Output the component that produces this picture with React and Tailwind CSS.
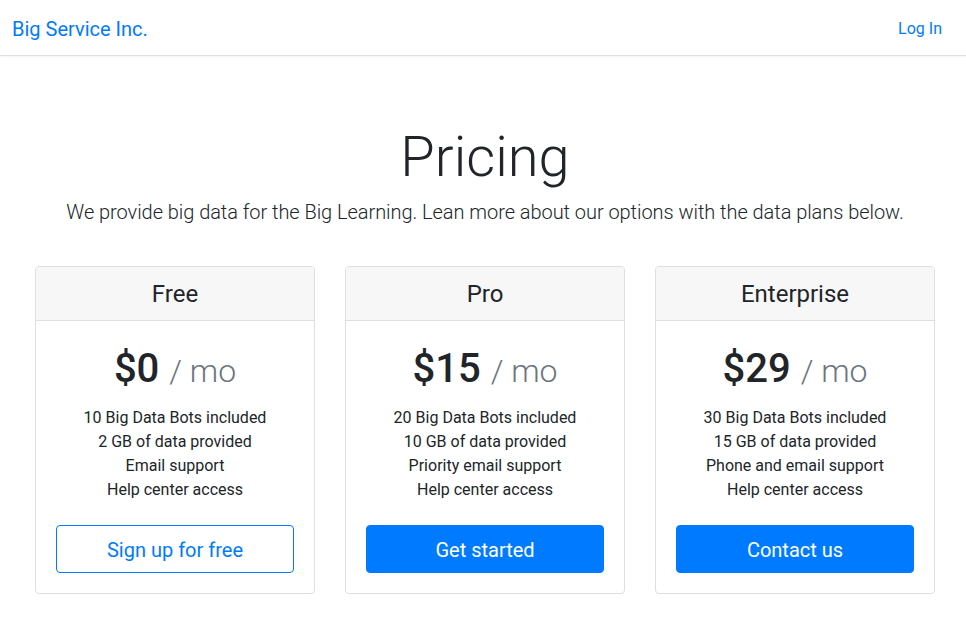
import React from 'react';

const plans = [
    {
        name: 'Free',
        price: '$0',
        features: ['10 Big Data Bots included', '2 GB of data provided', 'Email support', 'Help center access'],
        cta: 'Sign up for free',
        outline: true,
    },
    {
        name: 'Pro',
        price: '$15',
        features: ['20 Big Data Bots included', '10 GB of data provided', 'Priority email support', 'Help center access'],
        cta: 'Get started',
    },
    {
        name: 'Enterprise',
        price: '$29',
        features: ['30 Big Data Bots included', '15 GB of data provided', 'Phone and email support', 'Help center access'],
        cta: 'Contact us',
    },
];

function PlanCard({ plan }) {
    return (
        <div className="flex-1 flex flex-col bg-white border border-[#dfdfdf] rounded-[4px] text-center">
            <div className="bg-[#f7f7f7] border-b border-[#dfdfdf] px-5 pt-[13px] pb-[11px] rounded-t-[3px]">
                <h4 className="text-[24px] leading-[28.8px] font-normal text-[#212529]">{plan.name}</h4>
            </div>
            <div className="p-5 flex flex-col">
                <h1 className="h-[48px] text-[40px] leading-[56px] font-medium text-[#212529]">
                    {plan.price} <small className="text-[32px] leading-none font-light text-[#6c757d]">/ mo</small>
                </h1>
                <ul className="mt-[17px] mb-[23px] text-[16px] leading-[24px] text-[#212529]">
                    {plan.features.map((f) => (
                        <li key={f}>{f}</li>
                    ))}
                </ul>
                {plan.outline ? (
                    <button className="w-full h-[48px] pt-[2px] rounded-[4px] border border-[#007bff] text-[#007bff] bg-white text-[20px]">
                        {plan.cta}
                    </button>
                ) : (
                    <button className="w-full h-[48px] pt-[2px] rounded-[4px] border border-[#007bff] bg-[#007bff] text-white text-[20px]">
                        {plan.cta}
                    </button>
                )}
            </div>
        </div>
    );
}

export default function App() {
    return (
        <div className="min-h-screen bg-white font-['Roboto',sans-serif] text-[#212529]">
            <header className="flex items-center justify-between h-[56px] pt-[3px] pl-[12px] pr-[16px] bg-white border-b border-[#dee2e6] shadow-[0_1px_2px_rgba(0,0,0,0.05)]">
                <h5 className="text-[20px] leading-[24px] font-normal text-[#007bff]">Big Service Inc.</h5>
                <nav>
                    <a href="#" className="block p-2 text-[16px] leading-[24px] text-[#007bff]">Log In</a>
                </nav>
            </header>

            <div className="ml-[35px] w-[900px]">
                <div className="pt-[68px] pb-[24px] text-center">
                    <h1 className="text-[56px] leading-[67px] font-light text-[#212529] mb-[6px]">Pricing</h1>
                    <p className="text-[20px] leading-[30px] font-light tracking-[-0.05px] text-[#212529] whitespace-nowrap">
                        We provide big data for the Big Learning. Lean more about our options with the data plans below.
                    </p>
                </div>

                <div className="flex gap-[30px] mt-[15px] mb-6">
                    {plans.map((p) => (
                        <PlanCard key={p.name} plan={p} />
                    ))}
                </div>
            </div>
        </div>
    );
}
